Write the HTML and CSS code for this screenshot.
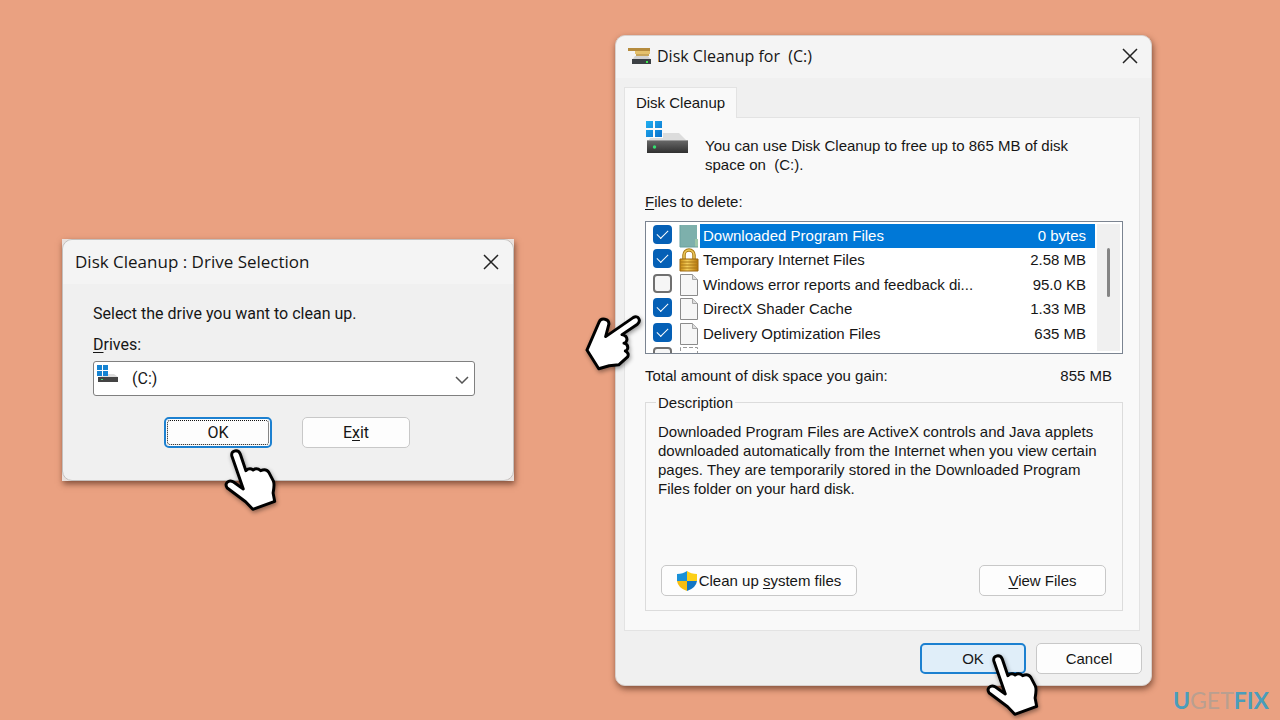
FILE: index.html
```html
<!DOCTYPE html>
<html lang="en">
<head>
<meta charset="utf-8">
<meta name="viewport" content="width=device-width, initial-scale=1">
<title>Disk Cleanup</title>
<link rel="stylesheet" href="styles.css">
</head>
<body>
<svg class="defs" aria-hidden="true">
  <defs>
    <linearGradient id="steel" x1="0" y1="0" x2="0" y2="1"><stop offset="0" stop-color="#6a6a6a"/><stop offset="1" stop-color="#303030"/></linearGradient>
    <linearGradient id="pane" x1="0" y1="0" x2="1" y2="1"><stop offset="0" stop-color="#21b0f0"/><stop offset="1" stop-color="#0a70cc"/></linearGradient>
    <linearGradient id="gold" x1="0" y1="0" x2="1" y2="0"><stop offset="0" stop-color="#c98a12"/><stop offset=".4" stop-color="#f5cf5c"/><stop offset="1" stop-color="#b8770c"/></linearGradient>
    <symbol id="drive" viewBox="0 0 44 36">
      <path d="M9 13h25l8 8H3z" fill="#dcdcdc"/>
      <path d="M2 20h41v13H2z" fill="url(#steel)"/>
      <path d="M2 20h41v1H2z" fill="#999"/>
      <circle cx="9.500" cy="27" r="1.700" fill="#35e070"/>
      <path d="M0 0h18v18H0z" fill="#f9f9f9"/>
      <path d="M1 1h7v7H1zM10 1h7v7h-7zM1 10h7v7H1zM10 10h7v7h-7z" fill="url(#pane)"/>
    </symbol>
    <symbol id="page" viewBox="0 0 20 24">
      <path d="M1.500 1.500h12l5 5v16h-17z" fill="#f6f6f6" stroke="#8b8b8b"/>
      <path d="M13.500 1.500v5h5" fill="#ddd" stroke="#a5a5a5"/>
    </symbol>
    <symbol id="hand" viewBox="220 145 168 195">
      <path d="M247 169C243 151 267 148 273 164L290 214Q301 204 312 212Q323 204 335 214Q351 206 360 219L374 246Q378 256 373 282L378 308L311 332L289 309L233 267C223 253 237 240 251 248L282 270Z" fill="#fff" stroke="#000" stroke-width="9" stroke-linejoin="round"/>
    </symbol>
  </defs>
</svg>

<main class="desktop">
  <section class="window drive-window" aria-labelledby="drive-title">
    <div class="drive-surface">
      <header class="titlebar">
        <h1 id="drive-title">Disk Cleanup : Drive Selection</h1>
        <button class="close" aria-label="Close"><svg viewBox="0 0 16 16"><path d="M1 1l14 14M15 1L1 15"/></svg></button>
      </header>
      <form class="drive-form">
        <p>Select the drive you want to clean up.</p>
        <label for="drives"><u>D</u>rives:</label>
        <div class="combo">
          <select id="drives"><option>(C:)</option></select>
          <svg class="combo-icon" viewBox="0 0 22 18"><path d="M10 9h7l4 3H2z" fill="#dedede"/><path d="M1 12h20v5H1z" fill="#444"/><path d="M4 14h2v1H4z" fill="#3fe07a"/><path d="M0 0h5v5H0zM6 0h5v5H6zM0 6h5v5H0zM6 6h5v5H6z" fill="#1583d2"/></svg>
          <svg class="combo-arrow" viewBox="0 0 14 8"><path d="M1 1l6 6 6-6"/></svg>
        </div>
        <div class="drive-actions">
          <button type="button" class="btn focused"><span>OK</span></button>
          <button type="button" class="btn">E<u>x</u>it</button>
        </div>
      </form>
    </div>
  </section>

  <section class="window cleanup-window" aria-labelledby="cleanup-title">
    <header class="titlebar">
      <svg class="app-icon" viewBox="0 0 24 18"><path d="M0 1h22v3H0z" fill="#b58b3d"/><path d="M7 4h15v3H7z" fill="#e5c16d"/><path d="M8 7h13v2H8z" fill="#c9a65a"/><path d="M7 9h13l3 4H4z" fill="#d3d3d3"/><path d="M4 12h19v5H4z" fill="#3c4044"/><path d="M18 14h2v2h-2z" fill="#3fe84e"/></svg>
      <h1 id="cleanup-title">Disk Cleanup for&nbsp; (C:)</h1>
      <button class="close" aria-label="Close"><svg viewBox="0 0 16 16"><path d="M1 1l14 14M15 1L1 15"/></svg></button>
    </header>
    <div class="cleanup-body">
      <div role="tablist"><button class="tab" role="tab" aria-selected="true">Disk Cleanup</button></div>
      <div class="panel" role="tabpanel">
        <div class="intro">
          <svg class="drive-icon"><use href="#drive"/></svg>
          <p>You can use Disk Cleanup to free up to 865 MB of disk space on&nbsp; (C:).</p>
        </div>
        <p class="files-label" id="files-label"><u>F</u>iles to delete:</p>
        <div class="files">
          <ul class="rows" aria-labelledby="files-label">
            <li><input type="checkbox" id="f1" checked><svg class="file-icon" viewBox="0 0 20 24"><path d="M1 1h17v15l1 7H1z" fill="#7db0ac"/><path d="M16 15h3v8h-3z" fill="#9bc6a9"/><path d="M1 1v22h18" fill="none" stroke="#68a19f"/></svg><label class="selected" for="f1"><span>Downloaded Program Files</span><span>0 bytes</span></label></li>
            <li><input type="checkbox" id="f2" checked><svg class="file-icon" viewBox="0 0 20 24"><path d="M5 12V7a5 5 0 0 1 10 0v5" fill="none" stroke="#a87812" stroke-width="3.500"/><path d="M5 12V7a5 5 0 0 1 10 0v5" fill="none" stroke="#ecc75b" stroke-width="1.500"/><path d="M1 11h18v12H1z" fill="url(#gold)" stroke="#9a6710"/><path d="M1 14h18M1 17h18M1 20h18" stroke="#a97716"/></svg><label for="f2"><span>Temporary Internet Files</span><span>2.58 MB</span></label></li>
            <li><input type="checkbox" id="f3"><svg class="file-icon"><use href="#page"/></svg><label for="f3"><span>Windows error reports and feedback di...</span><span>95.0 KB</span></label></li>
            <li><input type="checkbox" id="f4" checked><svg class="file-icon"><use href="#page"/></svg><label for="f4"><span>DirectX Shader Cache</span><span>1.33 MB</span></label></li>
            <li><input type="checkbox" id="f5" checked><svg class="file-icon"><use href="#page"/></svg><label for="f5"><span>Delivery Optimization Files</span><span>635 MB</span></label></li>
            <li><input type="checkbox" aria-label="Next item"><svg class="file-icon" viewBox="0 0 20 24"><path d="M1.500 23V1.500h17V23" fill="none" stroke="#999" stroke-dasharray="4 2"/></svg></li>
          </ul>
          <div class="scrollbar"><div class="thumb"></div></div>
        </div>
        <p class="total"><span>Total amount of disk space you gain:</span><span>855 MB</span></p>
        <fieldset class="description">
          <legend>Description</legend>
          <p>Downloaded Program Files are ActiveX controls and Java applets downloaded automatically from the Internet when you view certain pages. They are temporarily stored in the Downloaded Program Files folder on your hard disk.</p>
          <div class="description-actions">
            <button class="btn system"><svg class="shield" viewBox="0 0 20 20"><path d="M10 0Q6 3 0 3V10H10z" fill="#1990d8"/><path d="M10 0Q14 3 20 3V10H10z" fill="#fccf16"/><path d="M0 10Q1 17 10 20V10z" fill="#f6bd12"/><path d="M20 10Q19 17 10 20V10z" fill="#1276c4"/></svg><span>Clean up <u>s</u>ystem files</span></button>
            <button class="btn view"><span><u>V</u>iew Files</span></button>
          </div>
        </fieldset>
      </div>
      <div class="window-actions">
        <button class="btn primary">OK</button>
        <button class="btn">Cancel</button>
      </div>
    </div>
  </section>

  <svg class="pointer pointer-drive" aria-hidden="true"><use href="#hand"/></svg>
  <svg class="pointer pointer-list" viewBox="8 312 180 177" aria-hidden="true"><path d="M20 422L57 337C63 321 88 327 87 343L77 381L161 323C177 314 187 333 173 344L127 375Q143 378 142 391Q139 401 133 401Q147 405 144 418Q140 425 137 425Q150 432 144 443L117 467L88 470L56 479Z" fill="#fff" stroke="#000" stroke-width="9" stroke-linejoin="round"/></svg>
  <svg class="pointer pointer-ok" aria-hidden="true"><use href="#hand"/></svg>
  <div class="brand"><b>U</b><span>GET</span><b>FIX</b></div>
</main>
</body>
</html>
```

FILE: styles.css
```css
* { box-sizing: border-box; }
body {
  margin: 0;
  background: #eaa181;
  color: #161616;
  font: 16px/19px Roboto, "Liberation Sans", sans-serif;
}
p, h1, ul { margin: 0; padding: 0; }
button, select { font: inherit; color: inherit; }
u { text-underline-offset: 2px; }
.defs { position: absolute; width: 0; height: 0; }
.desktop { position: relative; min-height: 100vh; overflow: hidden; }

.window {
  position: absolute;
  box-shadow: 1px 3px 6px rgba(60, 25, 10, .6);
}
.drive-window { left: 62px; top: 239px; width: 452px; background: #e9e1de; }
.drive-surface { background: #f0f0f0; border: 1px solid #c4c0be; border-radius: 10px; }
.cleanup-window {
  left: 615px;
  top: 35px;
  width: 537px;
  background: #f0f0f0;
  border: 1px solid #d8d0cd;
  border-radius: 10px;
  font: 15px/19px "Liberation Sans", Arial, sans-serif;
}
.titlebar {
  display: flex;
  align-items: center;
  gap: 5px;
  height: 44px;
  padding: 0 12px;
  background: #f4f4f4;
  border-radius: 10px 10px 0 0;
}
.titlebar h1 { flex: 1; font: 17px/24px "Open Sans", "Noto Sans", sans-serif; }
.cleanup-window .titlebar { height: 42px; padding: 0 11px 2px 12px; }
.cleanup-window .titlebar h1 { font-size: 16px; }
.app-icon { width: 24px; height: 18px; }
.close { width: 20px; height: 20px; padding: 2px; border: 0; background: none; }
.close svg { display: block; width: 16px; height: 16px; fill: none; stroke: #222; stroke-width: 1.5; }

.drive-form { padding: 20px 38px 32px 30px; }
.drive-form label { display: block; margin: 12px 0 7px; }
.combo { position: relative; }
.combo select {
  display: block;
  width: 100%;
  height: 35px;
  padding: 0 38px;
  appearance: none;
  background: #fff;
  border: 1px solid #808080;
  border-radius: 3px;
}
.combo-icon { position: absolute; left: 4px; top: 4px; width: 22px; height: 18px; }
.combo-arrow { position: absolute; right: 6px; top: 15px; width: 14px; height: 8px; fill: none; stroke: #555; stroke-width: 1.5; }
.drive-actions { display: flex; justify-content: center; gap: 30px; margin-top: 21px; padding-left: 6px; }

.btn {
  min-width: 108px;
  height: 31px;
  padding: 0;
  background: #fdfdfd;
  border: 1px solid #c8c8c8;
  border-radius: 5px;
}
.focused { padding: 1px; border: 2px solid #1c80d0; }
.focused span { display: block; border: 1px dotted #111; border-radius: 3px; line-height: 23px; }

.cleanup-body { padding: 9px 11px 11px 8px; }
.tab {
  display: block;
  position: relative;
  width: 113px;
  height: 31px;
  margin-bottom: -1px;
  padding: 0 0 2px;
  background: #f9f9f9;
  border: 1px solid #e3e3e3;
  border-bottom: 0;
}
.panel { padding: 2px 16px 19px 20px; background: #f9f9f9; border: 1px solid #e3e3e3; }
.intro { display: flex; gap: 16px; padding-right: 24px; }
.intro p { flex: 1; padding-top: 16px; }
.drive-icon { width: 44px; height: 36px; }
.files-label { margin: 18px 0 10px; }
.files {
  display: flex;
  height: 133px;
  padding: 2px 2px 2px 7px;
  overflow: hidden;
  background: #fff;
  border: 1px solid #7b8491;
}
.rows { display: flex; flex: 1; flex-direction: column; justify-content: space-between; height: 146px; list-style: none; }
.rows li { display: flex; align-items: center; height: 24px; }
.rows input {
  display: grid;
  place-items: center;
  width: 19px;
  height: 19px;
  margin: 0 7px 3px 0;
  appearance: none;
  background: #f6f6f6;
  border: 2px solid #707070;
  border-radius: 4px;
}
.rows input:checked { background: #0560b6; border-color: #0560b6; }
.rows input:checked::after {
  content: "";
  width: 10px;
  height: 5px;
  margin-bottom: 3px;
  border: solid #fff;
  border-width: 0 0 1px 1px;
  transform: rotate(-45deg);
}
.file-icon { width: 20px; height: 24px; }
.rows label { display: flex; flex: 1; justify-content: space-between; margin-left: 1px; padding: 0 9px 0 3px; line-height: 24px; }
.rows .selected { background: #0078d7; color: #fff; }
.scrollbar { width: 23px; height: 127px; margin-left: 2px; padding: 24px 0 0 10px; background: #f0f0f0; }
.thumb { width: 3px; height: 49px; background: #858585; border-radius: 2px; }
.total { display: flex; justify-content: space-between; margin: 12px 11px 8px 0; }
.description { min-width: 0; margin: 0; padding: 10px 16px 14px 12px; border: 1px solid #dcdcdc; }
.description legend { padding: 0 2px; margin-left: -2px; }
.description-actions { display: flex; justify-content: space-between; margin: 67px 0 0 3px; }
.system { display: flex; align-items: center; justify-content: center; gap: 2px; width: 196px; }
.shield { width: 20px; height: 20px; }
.view { width: 127px; }
.window-actions { display: flex; justify-content: flex-end; gap: 10px; margin: 12px -2px 0 0; }
.window-actions .btn { width: 106px; min-width: 0; }
.window-actions .primary { background: #e0eef9; border: 2px solid #1c80d0; }

.pointer { position: absolute; pointer-events: none; filter: drop-shadow(1px 2px 2px rgba(0, 0, 0, .4)); }
.pointer-drive { left: 223px; top: 448px; width: 55px; height: 64px; }
.pointer-ok { left: 985px; top: 653px; width: 55px; height: 64px; }
.pointer-list { left: 583px; top: 314px; width: 59px; height: 58px; }
.brand { position: absolute; right: 11px; bottom: 6px; color: #b99f90; font: 23px/28px Lato, sans-serif; }
.brand b { color: #4a9dbb; }
```
